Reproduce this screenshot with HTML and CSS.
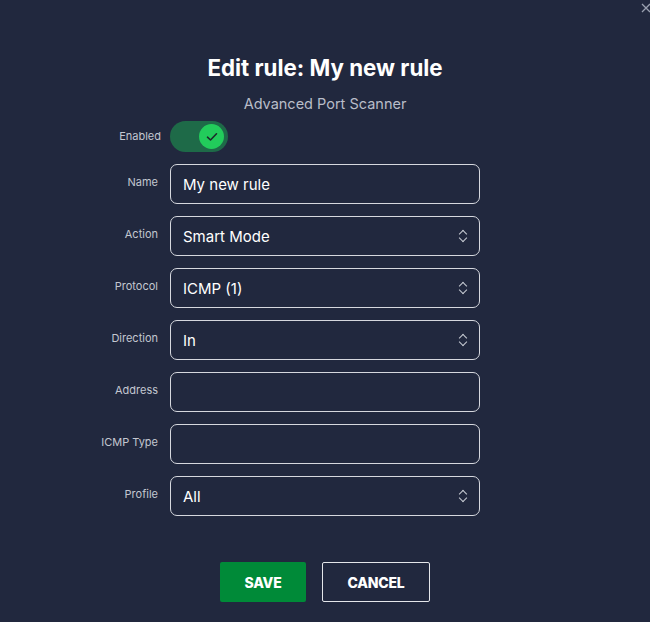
FILE: index.html
```html
<!DOCTYPE html>
<html>
<head>
<meta charset="utf-8">
<link rel="stylesheet" href="styles.css">
</head>
<body>
<div class="dialog">
  <button class="close" aria-label="Close">
    <svg width="10" height="10" viewBox="0 0 10 10"><path d="M1 1L9 9M9 1L1 9" stroke="#9aa0b0" stroke-width="1.3"/></svg>
  </button>
  <h1 class="title">Edit rule: My new rule</h1>
  <p class="subtitle">Advanced Port Scanner</p>
  <div class="form">
    <label class="label label-enabled">Enabled</label>
    <div class="toggle">
      <span class="knob">
        <svg width="12" height="10" viewBox="0 0 12 10"><path d="M1.5 5.2L4.5 8L10.5 1.8" fill="none" stroke="#1c2a2a" stroke-width="1.6" stroke-linecap="round" stroke-linejoin="round"/></svg>
      </span>
    </div>

    <label class="label">Name</label>
    <div class="field">My new rule</div>

    <label class="label">Action</label>
    <div class="field select">Smart Mode<span class="chev"></span></div>

    <label class="label">Protocol</label>
    <div class="field select">ICMP (1)<span class="chev"></span></div>

    <label class="label">Direction</label>
    <div class="field select">In<span class="chev"></span></div>

    <label class="label">Address</label>
    <div class="field"></div>

    <label class="label">ICMP Type</label>
    <div class="field"></div>

    <label class="label">Profile</label>
    <div class="field select">All<span class="chev"></span></div>
  </div>
  <div class="actions">
    <button class="btn btn-save">SAVE</button>
    <button class="btn btn-cancel">CANCEL</button>
  </div>
</div>
</body>
</html>
```
FILE: styles.css
```css
* { box-sizing: border-box; }
html, body { margin: 0; padding: 0; }
body {
  background: #21283e;
  font-family: Inter, "Noto Sans", sans-serif;
  color: #fff;
  width: 650px;
  height: 622px;
  overflow: hidden;
}
.dialog {
  position: relative;
  width: 650px;
  height: 622px;
  padding-top: 54px;
}
.close {
  position: absolute;
  top: 3px;
  left: 641px;
  width: 10px;
  height: 10px;
  padding: 0;
  border: 0;
  background: none;
  display: block;
}
.close svg { display: block; }
.title {
  margin: 0;
  text-align: center;
  font-size: 22.3px;
  line-height: 28px;
  font-weight: 700;
  letter-spacing: 0;
}
.subtitle {
  margin: 12px 0 0;
  text-align: center;
  font-size: 14.5px;
  line-height: 20px;
  color: #b9bdc8;
}
.form {
  margin-top: 7px;
  display: grid;
  grid-template-columns: 158px 310px;
  column-gap: 12px;
  row-gap: 12px;
}
.label {
  justify-self: end;
  align-self: center;
  font-size: 11px;
  line-height: 14px;
  color: #c3c7d0;
  padding-bottom: 4px;
}
.label-enabled { margin-right: -3px; padding-bottom: 1px; }
.toggle {
  width: 58px;
  height: 31px;
  border-radius: 16px;
  background: #1e6a48;
  position: relative;
  display: flex;
  align-items: center;
  justify-content: flex-end;
  padding-right: 4px;
}
.knob {
  width: 25px;
  height: 25px;
  border-radius: 50%;
  background: #22cc5b;
  display: flex;
  align-items: center;
  justify-content: center;
}
.knob svg { display: block; }
.field {
  height: 40px;
  border: 1px solid #d6d8de;
  border-radius: 7px;
  display: flex;
  align-items: center;
  padding: 0 12px;
  font-size: 15px;
  color: #fff;
  position: relative;
}
.chev {
  position: absolute;
  right: 11px;
  top: 50%;
  width: 9px;
  height: 14px;
  margin-top: -7px;
}
.chev::before, .chev::after {
  content: "";
  position: absolute;
  left: 1px;
  width: 5px;
  height: 5px;
  border-left: 1.2px solid #c8ccd4;
  border-top: 1.2px solid #c8ccd4;
}
.chev::before { top: 2px; transform: rotate(45deg); }
.chev::after { bottom: 2px; transform: rotate(225deg); }
.actions {
  margin-top: 46px;
  display: flex;
  justify-content: center;
  gap: 16px;
}
.btn {
  height: 40px;
  font-family: Inter, "Noto Sans", sans-serif;
  font-size: 14px;
  font-weight: 800;
  color: #fff;
  border-radius: 2px;
  letter-spacing: -0.2px;
  cursor: pointer;
}
.btn-save {
  width: 86px;
  background: #008a38;
  border: 0;
}
.btn-cancel {
  width: 108px;
  background: transparent;
  border: 1px solid #e4e6ea;
}
```
